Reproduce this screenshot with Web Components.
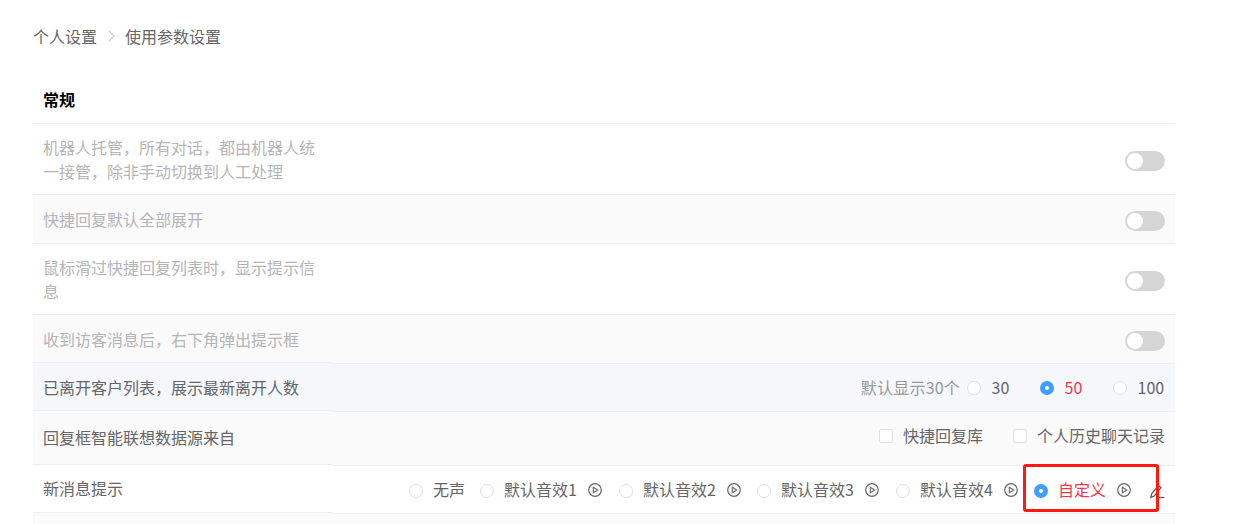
<!DOCTYPE html>
<html lang="zh">
<head>
<meta charset="utf-8">
<style>
html,body{margin:0;padding:0;background:#fff;overflow:hidden}
body{font-family:"Noto Sans CJK SC","Noto Sans",sans-serif;font-size:16px;color:#666}
</style>
</head>
<body>
<settings-page>
  <bread-crumb><span>个人设置</span><span>使用参数设置</span></bread-crumb>
  <section-title>常规</section-title>
  <setting-row h="71" muted><span slot="label">机器人托管，所有对话，都由机器人统一接管，除非手动切换到人工处理</span><toggle-switch></toggle-switch></setting-row>
  <setting-row h="49" muted alt><span slot="label">快捷回复默认全部展开</span><toggle-switch></toggle-switch></setting-row>
  <setting-row h="71" muted><span slot="label">鼠标滑过快捷回复列表时，显示提示信息</span><toggle-switch></toggle-switch></setting-row>
  <setting-row h="48" muted alt step><span slot="label">收到访客消息后，右下角弹出提示框</span><toggle-switch></toggle-switch></setting-row>
  <setting-row h="48" tint step after pb="2" style="--dot-gap:10.5px">
    <span slot="label">已离开客户列表，展示最新离开人数</span>
    <span style="color:#999;margin-right:7px;letter-spacing:.2px">默认显示30个</span>
    <radio-item label="30" w="73"></radio-item>
    <radio-item label="50" w="73" checked></radio-item>
    <radio-item label="100" w="52"></radio-item>
  </setting-row>
  <setting-row h="54" alt step after pb="8" lpb="2">
    <span slot="label">回复框智能联想数据源来自</span>
    <check-item label="快捷回复库" style="margin-right:30px"></check-item>
    <check-item label="个人历史聊天记录"></check-item>
  </setting-row>
  <setting-row h="48" step after pb="2" lpb="2" style="--dot-top:5px;--icon-top:3px">
    <span slot="label">新消息提示</span>
    <radio-item label="无声" w="71"></radio-item>
    <radio-item label="默认音效1" w="139" play></radio-item>
    <radio-item label="默认音效2" w="138" play></radio-item>
    <radio-item label="默认音效3" w="139" play></radio-item>
    <radio-item label="默认音效4" w="138" play></radio-item>
    <radio-item label="自定义" w="116" play checked></radio-item>
    <edit-icon></edit-icon>
  </setting-row>
  <setting-row h="40" alt after></setting-row>
  <red-mark></red-mark>
</settings-page>
<script>
function def(name, html, init){
  customElements.define(name, class extends HTMLElement{
    connectedCallback(){
      if(this.shadowRoot) return;
      const r=this.attachShadow({mode:'open'});
      r.innerHTML=typeof html==='function'?html(this):html;
      if(init) init(this,r);
    }
  });
}
def('settings-page',`<style>
:host{display:block;position:relative;width:1142px;margin-left:33px;height:524px;overflow:hidden}
</style><slot></slot>`);
def('bread-crumb',`<style>
:host{display:flex;align-items:center;height:22px;padding-top:25px;margin-bottom:29px;color:#666;line-height:22px}
svg{margin:0 10px 0 11px;display:block}
</style><slot name="a"></slot><svg width="7" height="12" viewBox="0 0 7 12"><path d="M.7 .7l5.300 5.300-5.300 5.300" fill="none" stroke="#c8c9cc" stroke-width="1.1"/></svg><slot name="b"></slot>`,
(h)=>{const s=h.querySelectorAll('span');s[0].slot='a';s[1].slot='b';});
def('section-title',`<style>
:host{display:flex;align-items:center;box-sizing:border-box;height:48px;padding:0 0 2px 10px;font-weight:700;color:#000;border-bottom:1px solid #ebeef5}
</style><slot></slot>`);
def('setting-row',(h)=>{
  const H=+h.getAttribute('h');
  const bg=h.hasAttribute('tint')?'#f5f7fb':h.hasAttribute('alt')?'#fafafa':'#fff';
  const step=h.hasAttribute('step'), after=h.hasAttribute('after');
  return `<style>
:host{display:grid;grid-template-columns:300px 1fr;height:${H}px;background:${bg}}
.l{box-sizing:border-box;display:flex;align-items:center;padding:0 10px ${h.getAttribute('lpb')||0}px;line-height:24px;color:${h.hasAttribute('muted')?'#b5b5b5':'#666'};border-bottom:1px solid ${H===40?'transparent':'#ebeef5'}}
.r{box-sizing:border-box;display:flex;align-items:center;justify-content:flex-end;padding:0 10px ${h.getAttribute('pb')||0}px;border-bottom:1px solid ${H===40?'transparent':'#ebeef5'};position:relative;z-index:1;background:${bg};${step?'margin-bottom:-1px;':''}${after?'margin-top:1px;':''}}
</style><div class="l"><div><slot name="label"></slot></div></div><div class="r"><slot></slot></div>`;
});
def('toggle-switch',`<style>
:host{display:block;box-sizing:border-box;width:40px;height:20px;margin-top:4px;border-radius:10px;background:#d5d5d5;position:relative}
i{position:absolute;left:2px;top:2px;width:16px;height:16px;border-radius:50%;background:#fff}
</style><i></i>`);
def('radio-item',(h)=>{
  const c=h.hasAttribute('checked');
  return `<style>
:host{display:inline-flex;align-items:center;width:${h.getAttribute('w')}px;color:${c?'#f5354a':'#666'}}
.d{box-sizing:border-box;width:14px;height:14px;flex:none;border-radius:50%;margin:var(--dot-top,3px) var(--dot-gap,10px) 0 0;background:#fff;border:1px solid #dcdfe6;${c?'border:5px solid #409eff':''}}
svg{display:block;margin:var(--icon-top,1px) 0 0 11.4px;flex:none}
</style><span class="d"></span><span>${h.getAttribute('label')}</span>${h.hasAttribute('play')?'<svg width="14" height="14" viewBox="0 0 14 14"><circle cx="7" cy="7" r="6.300" fill="none" stroke="#666" stroke-width="1.2"/><path d="M5.300 4.200L9.700 7 5.300 9.800z" fill="none" stroke="#666" stroke-width="1.100"/></svg>':''}`;
});
def('check-item',(h)=>`<style>
:host{display:inline-flex;align-items:center;color:#666}
.b{box-sizing:border-box;width:14px;height:14px;flex:none;margin:3px 10px 0 0;background:#fff;border:1px solid #dcdfe6;border-radius:2px}
</style><span class="b"></span><span>${h.getAttribute('label')}</span>`);
def('edit-icon',`<style>
:host{display:block;width:15px;height:15px;margin-top:6px}
svg{display:block}
</style><svg width="15" height="15" viewBox="0 0 15 15"><path d="M.8 13.500l1-4L8.500 1.500l2.500 2L4.500 11.700z" fill="none" stroke="#555" stroke-width="1.200"/><path d="M7 13.500h7.500" stroke="#555" stroke-width="1.200"/></svg>`);
def('red-mark',`<style>
:host{position:absolute;z-index:2;left:990px;top:464px;box-sizing:border-box;width:136px;height:48px;border:3px solid #ff1a10;border-radius:3px}
</style>`);
</script>
</body>
</html>
